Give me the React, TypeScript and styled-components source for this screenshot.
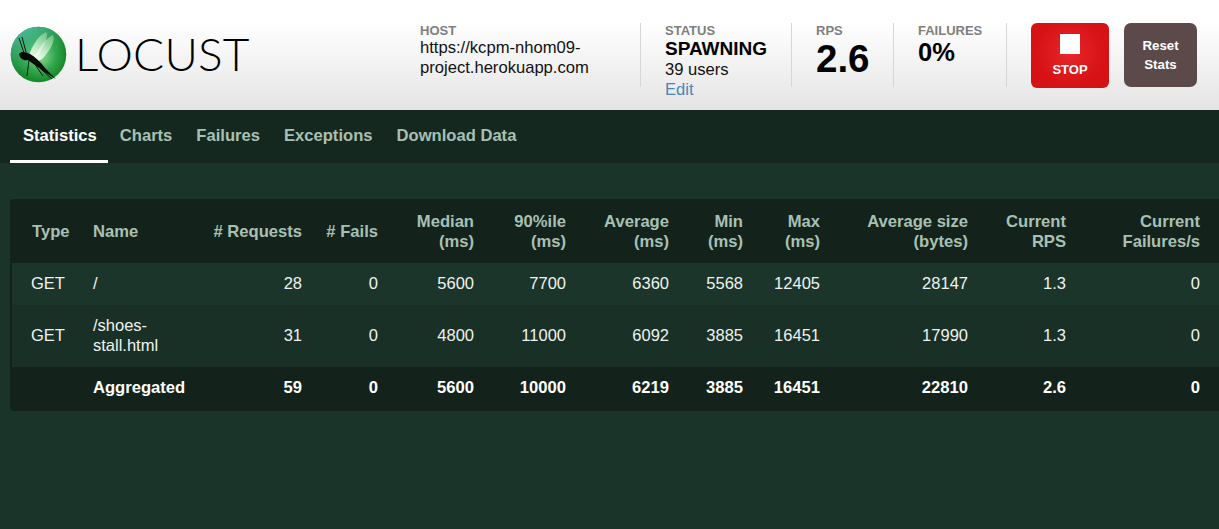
import React from "react";
import styled, { createGlobalStyle } from "styled-components";

const Global = createGlobalStyle`
  html, body { margin: 0; padding: 0; background: #1a3429; }
  body { font-family: "Liberation Sans", Arial, sans-serif; overflow: hidden; }
  * { box-sizing: border-box; }
`;
const Page = styled.div`width: 1219px; height: 529px; background: #1a3429; overflow: hidden;`;
const Header = styled.header`
  height: 110px; display: flex; align-items: flex-start;
  background: linear-gradient(to bottom, #ffffff 20%, #e4e4e4 100%);
`;
const Brand = styled.div`display: flex; align-items: center; margin: 25px 0 0 10px; width: 400px; gap: 8px;`;
const Wordmark = styled.span`
  font-family: Lato, sans-serif; font-weight: 300; font-size: 46px; line-height: 58px; color: #000; letter-spacing: 0.2px;
`;
const Stats = styled.div`display: flex; align-items: flex-start; margin-top: 23px;`;
const Stat = styled.div<{ $w: number; $pad?: number }>`
  width: ${p => p.$w}px; height: 64px; padding-left: ${p => p.$pad ?? 24}px;
  border-right: 1px solid #d6d6d6;
`;
const Label = styled.div`font-size: 13px; line-height: 15px; font-weight: 700; color: #7f7f7f;`;
const Plain = styled.div`font-size: 16.6px; line-height: 20px; color: #111;`;
const Status = styled.div`font-size: 19px; line-height: 20px; font-weight: 700; color: #000; margin: 1px 0;`;
const Big = styled.div<{ $s: number }>`font-size: ${p => p.$s}px; line-height: 1; font-weight: 700; color: #000; margin-top: 2px;`;
const EditLink = styled.a`font-size: 16.6px; line-height: 20px; color: #4a85b8; display: block;`;
const Buttons = styled.div`display: flex; align-items: flex-start; margin: 23px 0 0 24px; gap: 15px;`;
const StopBtn = styled.button`
  width: 78px; height: 65px; border: 0; border-radius: 6px; color: #fff; font: 700 13px "Liberation Sans", sans-serif;
  background: radial-gradient(circle at 50% 45%, #e6282c 0%, #d81317 60%, #d31013 100%);
  display: flex; flex-direction: column; align-items: center; padding: 11px 0 0; gap: 8px;
`;
const StopIcon = styled.span`width: 20px; height: 20px; background: #fff; display: block;`;
const ResetBtn = styled.button`
  width: 73px; height: 64px; border: 0; border-radius: 7px; background: #5c4a4a; color: #fff;
  font: 700 13.3px/19px "Liberation Sans", sans-serif; padding: 0;
`;
const Tabs = styled.nav`
  height: 53px; background: #142820; display: flex; padding-left: 10px;
`;
const Tab = styled.a<{ $active?: boolean }>`
  height: 53px; padding: 16px 12px 0 ${p => (p.$active ? 13 : 12)}px; font-size: 16.6px; line-height: 20px; font-weight: 700;
  padding-right: ${p => (p.$active ? 11 : 12)}px;
  color: ${p => (p.$active ? "#fff" : "#a8c0b3")};
  border-bottom: 3px solid ${p => (p.$active ? "#fff" : "transparent")};
`;
const Panel = styled.div`margin: 36px 0 0 10px; width: 1215px; border-radius: 4px; overflow: hidden; border-left: 2px solid #13231b;`;
const Table = styled.table`
  border-collapse: collapse; table-layout: fixed; width: 1213px; font-size: 16.5px; line-height: 20px; color: #f0f2f0;
`;
const Col = styled.col<{ $w: number }>`width: ${p => p.$w}px;`;
const Head = styled.thead`background: #13231b;`;
const Th = styled.th<{ $left?: boolean; $first?: boolean }>`
  height: 64px; padding: 2px 10px 0 ${p => (p.$first ? 20 : 10)}px; font-weight: 700; font-size: 16.6px; color: #a8c0b3;
  text-align: ${p => (p.$left ? "left" : "right")};
`;
const Row = styled.tr<{ $h: number; $alt?: boolean }>`
  height: ${p => p.$h}px; background: ${p => (p.$alt ? "#183026" : "#1b352b")};
`;
const Td = styled.td<{ $left?: boolean; $first?: boolean }>`
  padding: 0 10px 2px ${p => (p.$first ? 19 : 10)}px; text-align: ${p => (p.$left ? "left" : "right")};
`;
const Foot = styled.tr`
  height: 44px; background: #13231b; font-weight: 700; font-size: 16.6px; color: #fff;
`;

const Logo = () => (
  <svg width="57" height="57" viewBox="0 0 57 57" aria-hidden="true">
    <defs>
      <radialGradient id="orb" cx="52%" cy="52%" r="55%">
        <stop offset="0" stopColor="#9ae09a" />
        <stop offset="0.5" stopColor="#35a850" />
        <stop offset="0.85" stopColor="#158a2a" />
        <stop offset="1" stopColor="#0b6b22" />
      </radialGradient>
      <linearGradient id="rim" x1="0.1" y1="0" x2="0.5" y2="0.7">
        <stop offset="0" stopColor="#5cc6bc" />
        <stop offset="1" stopColor="#3ab070" stopOpacity="0" />
      </linearGradient>
      <linearGradient id="wing" x1="0.2" y1="1" x2="0.8" y2="0">
        <stop offset="0" stopColor="#f6fff2" stopOpacity=".95" />
        <stop offset="1" stopColor="#c4ecc4" stopOpacity=".45" />
      </linearGradient>
    </defs>
    <circle cx="28.5" cy="28.5" r="27.8" fill="url(#orb)" />
    <circle cx="28.5" cy="28.5" r="27.8" fill="url(#rim)" />
    <path d="M19 29 C23 18 29 9 36 6 C39 9 35 20 27 31 C24 34 20 33 19 29Z" fill="url(#wing)" />
    <path d="M24 31 C29 22 36 12 43 9 C46 14 40 25 32 33 C28 36 25 35 24 31Z" fill="url(#wing)" />
    <path d="M9 28 C11 25 16 26 20 28 C25 31 31 36 35 42 L46 53 L33 45 C28 41 22 37 18 34 C14 35 10 33 9 28Z" fill="#060b06" />
    <path d="M14 27 L9 12 M16 26 L12 11 M19 34 L17 50 M26 40 L33 50 M31 43 L42 53" stroke="#0a160c" strokeWidth="1" fill="none" />
  </svg>
);

const widths = [71, 113, 116, 76, 96, 92, 103, 74, 77, 148, 98, 134, 15];
const heads: [React.ReactNode, boolean?][] = [
  ["Type", true], ["Name", true], ["# Requests"], ["# Fails"],
  [<>Median<br />(ms)</>], [<>90%ile<br />(ms)</>], [<>Average<br />(ms)</>], [<>Min<br />(ms)</>], [<>Max<br />(ms)</>],
  [<>Average size<br />(bytes)</>], [<>Current<br />RPS</>], [<>Current<br />Failures/s</>],
];
const rows = [
  { h: 42, alt: false, cells: ["GET", "/", 28, 0, 5600, 7700, 6360, 5568, 12405, 28147, "1.3", 0] },
  { h: 62, alt: true, cells: ["GET", "/shoes-stall.html", 31, 0, 4800, 11000, 6092, 3885, 16451, 17990, "1.3", 0] },
];
const agg = ["", "Aggregated", 59, 0, 5600, 10000, 6219, 3885, 16451, 22810, "2.6", 0];

export default function App() {
  return (
    <Page>
      <Global />
      <Header>
        <Brand>
          <Logo />
          <Wordmark>LOCUST</Wordmark>
        </Brand>
        <Stats>
          <Stat $w={231} $pad={10}>
            <Label>HOST</Label>
            <Plain>https://kcpm-nhom09-<br />project.herokuapp.com</Plain>
          </Stat>
          <Stat $w={151}>
            <Label>STATUS</Label>
            <Status>SPAWNING</Status>
            <Plain>39 users</Plain>
            <EditLink>Edit</EditLink>
          </Stat>
          <Stat $w={102}>
            <Label>RPS</Label>
            <Big $s={38.5}>2.6</Big>
          </Stat>
          <Stat $w={113}>
            <Label>FAILURES</Label>
            <Big $s={25.5}>0%</Big>
          </Stat>
        </Stats>
        <Buttons>
          <StopBtn><StopIcon />STOP</StopBtn>
          <ResetBtn>Reset<br />Stats</ResetBtn>
        </Buttons>
      </Header>
      <Tabs>
        <Tab $active>Statistics</Tab>
        <Tab>Charts</Tab>
        <Tab>Failures</Tab>
        <Tab>Exceptions</Tab>
        <Tab>Download Data</Tab>
      </Tabs>
      <Panel>
        <Table>
          <colgroup>{widths.map((w, i) => <Col key={i} $w={w} />)}</colgroup>
          <Head>
            <tr>
              {heads.map(([h, left], i) => <Th key={i} $left={left} $first={i === 0}>{h}</Th>)}
              <Th />
            </tr>
          </Head>
          <tbody>
            {rows.map((r, ri) => (
              <Row key={ri} $h={r.h} $alt={r.alt}>
                {r.cells.map((c, i) => <Td key={i} $left={i < 2} $first={i === 0}>{c}</Td>)}
                <Td />
              </Row>
            ))}
            <Foot>
              {agg.map((c, i) => <Td key={i} $left={i < 2} $first={i === 0}>{c}</Td>)}
              <Td />
            </Foot>
          </tbody>
        </Table>
      </Panel>
    </Page>
  );
}
